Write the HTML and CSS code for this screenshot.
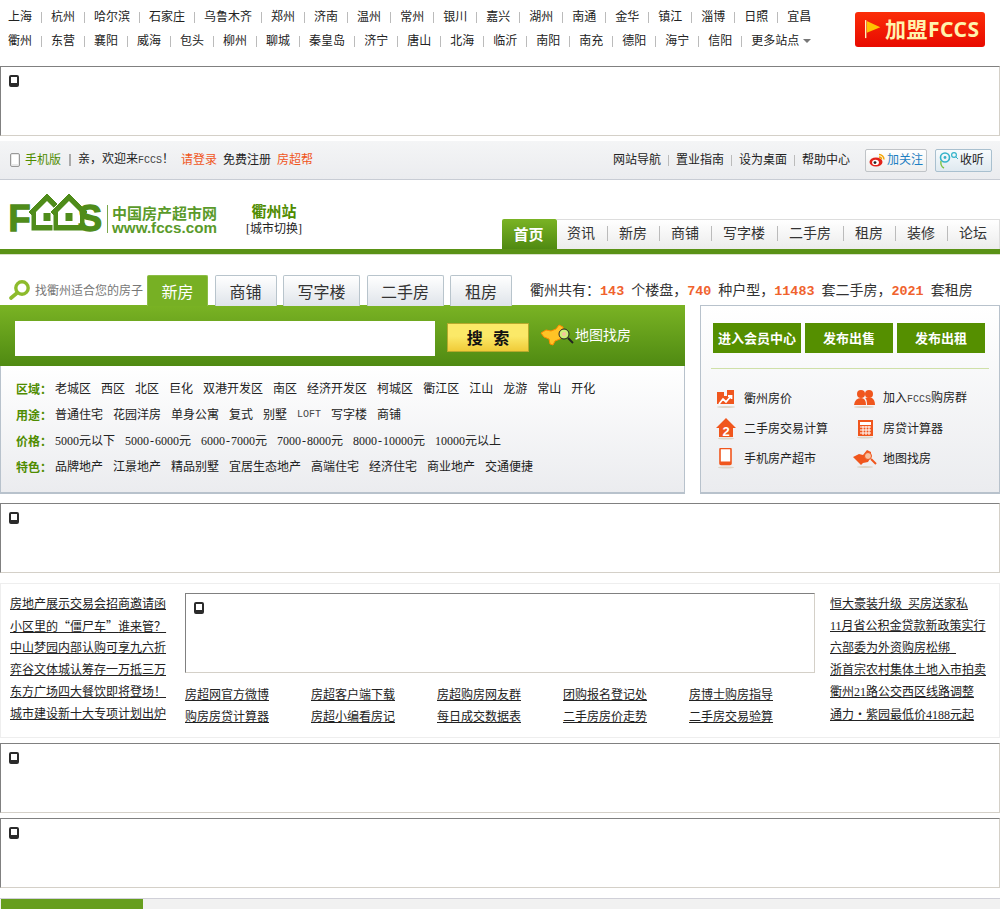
FILE: index.html
```html
<!DOCTYPE html>
<html lang="zh-CN">
<head>
<meta charset="utf-8">
<title>衢州房产超市网</title>
<link rel="stylesheet" href="styles.css">
</head>
<body>
<header class="top">
  <div class="cities">
    <ul class="city-row">
      <li>上海</li><li>杭州</li><li>哈尔滨</li><li>石家庄</li><li>乌鲁木齐</li><li>郑州</li><li>济南</li><li>温州</li><li>常州</li><li>银川</li><li>嘉兴</li><li>湖州</li><li>南通</li><li>金华</li><li>镇江</li><li>淄博</li><li>日照</li><li>宜昌</li>
    </ul>
    <ul class="city-row">
      <li>衢州</li><li>东营</li><li>襄阳</li><li>威海</li><li>包头</li><li>柳州</li><li>聊城</li><li>秦皇岛</li><li>济宁</li><li>唐山</li><li>北海</li><li>临沂</li><li>南阳</li><li>南充</li><li>德阳</li><li>海宁</li><li>信阳</li><li class="more">更多站点<i class="caret"></i></li>
    </ul>
  </div>
  <a class="join">
    <svg class="join-flag" viewBox="0 0 20 22" width="18" height="20"><rect x="0" y="0" width="1.5" height="20" fill="#fff3c0"/><path d="M2 1 L17 8 L2 14 Z" fill="#ffc400"/></svg>
    <span>加盟FCCS</span>
  </a>
</header>

<div class="ad"><i class="plug"></i></div>

<div class="toolbar">
  <div class="tool-left">
    <svg class="phone" viewBox="0 0 10 14" width="10" height="14"><rect x="0.5" y="0.5" width="9" height="13" rx="1.5" fill="#e8e8e8" stroke="#999"/><rect x="2" y="2" width="6" height="9" fill="#fff"/></svg>
    <a class="green mob">手机版</a>
    <i class="bar"></i>
    <span class="welcome">亲，欢迎来<span class="asc">FCCS</span>！</span>
    <a class="orange">请登录</a>
    <a>免费注册</a>
    <a class="orange">房超帮</a>
  </div>
  <div class="tool-right">
    <ul class="tool-links"><li>网站导航</li><li>置业指南</li><li>设为桌面</li><li>帮助中心</li></ul>
    <a class="follow">
      <svg viewBox="0 0 16 14" width="16" height="14"><ellipse cx="7" cy="9" rx="6.5" ry="4.6" fill="#e2231a"/><ellipse cx="6.5" cy="9.4" rx="3.4" ry="2.7" fill="#fff"/><circle cx="6" cy="9.6" r="1.4" fill="#222"/><path d="M10 1.5 A5 5 0 0 1 15 6.5 M10 4 A2.6 2.6 0 0 1 12.6 6.5" stroke="#f5a300" stroke-width="1.4" fill="none"/></svg>
      <span>加关注</span>
    </a>
    <a class="listen">
      <svg viewBox="0 0 20 18" width="20" height="18"><circle cx="6" cy="6.5" r="4.5" fill="none" stroke="#35b3c9" stroke-width="1.6"/><circle cx="6" cy="6.5" r="1.4" fill="#35b3c9"/><path d="M2 10 Q1 15 5 17" stroke="#7cc243" stroke-width="1.4" fill="none"/><circle cx="15" cy="4" r="2.4" fill="none" stroke="#35b3c9" stroke-width="1.2"/><path d="M17 6 L19 8" stroke="#35b3c9"/></svg>
      <span>收听</span>
    </a>
  </div>
</div>

<div class="masthead">
  <div class="logo">
    <svg class="logo-mark" viewBox="0 0 97 39" width="97" height="39">
      <text class="logo-letter" x="-1.5" y="37.5">F</text>
      <path d="M37 0 L56 19 L53 22 L53 38 L21 38 L21 22 L18 19 Z" fill="#4f8c1a" stroke="#fff" stroke-width="1"/>
      <path d="M37 8 L48 19 L48 32 L26 32 L26 19 Z" fill="#fff"/>
      <rect x="33.5" y="20" width="7" height="8" fill="#4f8c1a"/>
      <path d="M59 0 L78 19 L75 22 L75 38 L43 38 L43 22 L40 19 Z" fill="#4f8c1a" stroke="#fff" stroke-width="1"/>
      <path d="M59 8 L70 19 L70 32 L48 32 L48 19 Z" fill="#fff"/>
      <rect x="55.5" y="20" width="7" height="8" fill="#4f8c1a"/>
      <text class="logo-letter" x="68" y="37.5">S</text>
    </svg>
    <div class="logo-text">
      <strong>中国房产超市网</strong>
      <b>www.fccs.com</b>
    </div>
  </div>
  <div class="station">
    <strong>衢州站</strong>
    <span>[城市切换]</span>
  </div>
  <nav class="nav">
    <a class="nav-home">首页</a>
    <ul class="nav-list"><li>资讯</li><li>新房</li><li>商铺</li><li>写字楼</li><li>二手房</li><li>租房</li><li>装修</li><li>论坛</li></ul>
  </nav>
</div>
<div class="rule"></div>

<div class="search-head">
  <svg class="lens" viewBox="0 0 22 20" width="22" height="20"><circle cx="13" cy="8" r="6.2" fill="#fff" stroke="#8dbb2c" stroke-width="3.4"/><path d="M8 13 L2 18" stroke="#8dbb2c" stroke-width="3.6" stroke-linecap="round"/></svg>
  <span class="find">找衢州适合您的房子</span>
  <ul class="tabs">
    <li class="tab active">新房</li><li class="tab">商铺</li><li class="tab tab-wide">写字楼</li><li class="tab tab-wide">二手房</li><li class="tab">租房</li>
  </ul>
  <p class="stats">衢州共有：<b>143</b>个楼盘，<b>740</b>种户型，<b>11483</b>套二手房，<b>2021</b>套租房</p>
</div>

<div class="search-main">
  <section class="finder">
    <div class="search-bar">
      <div class="search-input"></div>
      <a class="search-btn">搜 索</a>
      <svg class="map" viewBox="0 0 34 22" width="34" height="22"><path d="M1 9 L6 6 L11 7 L16 5 L19 1 L23 3 L23 9 L20 15 L15 17 L13 21 L10 20 L9 15 L4 13 Z" fill="#ffc326" stroke="#ff8a00"/><circle cx="24" cy="10" r="5" fill="#cdf07a" stroke="#222"/><circle cx="24" cy="10" r="2" fill="#f7c1a0"/><path d="M28 14 L33 19" stroke="#222" stroke-width="2"/></svg>
      <a class="map-link">地图找房</a>
    </div>
    <div class="filters">
      <div class="filter"><b>区域：</b><a>老城区</a><a>西区</a><a>北区</a><a>巨化</a><a>双港开发区</a><a>南区</a><a>经济开发区</a><a>柯城区</a><a>衢江区</a><a>江山</a><a>龙游</a><a>常山</a><a>开化</a></div>
      <div class="filter"><b>用途：</b><a>普通住宅</a><a>花园洋房</a><a>单身公寓</a><a>复式</a><a>别墅</a><a class="asc">LOFT</a><a>写字楼</a><a>商铺</a></div>
      <div class="filter"><b>价格：</b><a>5000元以下</a><a>5000<span class="dash">-</span>6000元</a><a>6000<span class="dash">-</span>7000元</a><a>7000<span class="dash">-</span>8000元</a><a>8000<span class="dash">-</span>10000元</a><a>10000元以上</a></div>
      <div class="filter"><b>特色：</b><a>品牌地产</a><a>江景地产</a><a>精品别墅</a><a>宜居生态地产</a><a>高端住宅</a><a>经济住宅</a><a>商业地产</a><a>交通便捷</a></div>
    </div>
  </section>
  <aside class="member">
    <div class="member-btns"><a>进入会员中心</a><a>发布出售</a><a>发布出租</a></div>
    <ul class="member-links">
      <li><svg viewBox="0 0 20 20" width="20" height="20"><path d="M1 3 H8 V7 H11 V1 H18 V15 H1 Z" fill="#f0561d"/><path d="M3 15 L7 10 L10 13 L15 7 M12 7 H15.5 V10" stroke="#fff" stroke-width="1.8" fill="none"/><ellipse cx="10" cy="18" rx="9" ry="1" fill="#ddd5c8"/></svg><span>衢州房价</span></li>
      <li><svg viewBox="0 0 22 20" width="22" height="20"><circle cx="7" cy="5" r="4" fill="#f0561d"/><circle cx="15" cy="5" r="4" fill="#f0561d"/><path d="M0 16 Q1 9 7 9 Q12 9 12 16 Z M13 16 Q13 10 11 9 Q15 8 18 9 Q21 11 21 16 Z" fill="#f0561d"/><ellipse cx="10" cy="18" rx="10" ry="1" fill="#ddd5c8"/></svg><span>加入<span class="asc">FCCS</span>购房群</span></li>
      <li><svg viewBox="0 0 20 22" width="20" height="22"><path d="M10 0 L20 10 L17 10 L17 19 L3 19 L3 10 L0 10 Z" fill="#f0561d"/><text x="10" y="18" font-size="13" font-weight="700" font-family="Liberation Sans, sans-serif" text-anchor="middle" fill="#fff">2</text><ellipse cx="10" cy="20.5" rx="8" ry="1" fill="#ddd5c8"/></svg><span>二手房交易计算</span></li>
      <li><svg viewBox="0 0 20 20" width="20" height="20"><rect x="3" y="1" width="15" height="16" fill="#f0561d"/><rect x="5" y="3" width="11" height="3" fill="#fff"/><path d="M5 8 H16 M5 11 H16 M5 14 H16 M8 7 V16 M11 7 V16 M14 7 V16" stroke="#fff"/><ellipse cx="10" cy="18.5" rx="8" ry="1" fill="#ddd5c8"/></svg><span>房贷计算器</span></li>
      <li><svg viewBox="0 0 20 22" width="20" height="22"><rect x="4" y="0.5" width="11" height="16" rx="1" fill="#fff" stroke="#f0561d" stroke-width="1.6"/><rect x="4" y="13.5" width="11" height="3" fill="#f0561d"/><ellipse cx="10" cy="19.5" rx="8" ry="1" fill="#ddd5c8"/></svg><span>手机房产超市</span></li>
      <li><svg viewBox="0 0 24 20" width="24" height="20"><path d="M0 8 L6 5 L10 6 L14 1 L18 3 L18 8 L15 13 L10 14 L8 16 L4 12 Z" fill="#f0561d"/><circle cx="15" cy="7" r="3.5" fill="#f7c1a0" stroke="#f0561d"/><path d="M18 10 L23 15" stroke="#f0561d" stroke-width="2"/><ellipse cx="12" cy="18" rx="8" ry="1" fill="#ddd5c8"/></svg><span>地图找房</span></li>
    </ul>
  </aside>
</div>

<div class="ad ad-a"><i class="plug"></i></div>

<section class="news">
  <ul class="news-list">
    <li>房地产展示交易会招商邀请函</li>
    <li>小区里的<span class="wq">“</span>僵尸车<span class="wq">”</span>谁来管？</li>
    <li>中山梦园内部认购可享九六折</li>
    <li>弈谷文体城认筹存一万抵三万</li>
    <li>东方广场四大餐饮即将登场！</li>
    <li>城市建设新十大专项计划出炉</li>
  </ul>
  <div class="news-mid">
    <div class="ad ad-inner"><i class="plug"></i></div>
    <div class="quick">
      <a>房超网官方微博</a><a>房超客户端下载</a><a>房超购房网友群</a><a>团购报名登记处</a><a>房博士购房指导</a>
      <a>购房房贷计算器</a><a>房超小编看房记</a><a>每日成交数据表</a><a>二手房房价走势</a><a>二手房交易验算</a>
    </div>
  </div>
  <ul class="news-list news-right">
    <li>恒大豪装升级 买房送家私</li>
    <li>11月省公积金贷款新政策实行</li>
    <li>六部委为外资购房松绑&nbsp;</li>
    <li>浙首宗农村集体土地入市拍卖</li>
    <li>衢州21路公交西区线路调整</li>
    <li>通力<span class="wq">·</span>紫园最低价4188元起</li>
  </ul>
</section>

<div class="ad ad-b"><i class="plug"></i></div>
<div class="ad ad-c"><i class="plug"></i></div>

<div class="foot-tab"><div class="foot-active"></div></div>
</body>
</html>
```

FILE: styles.css
```css
* { box-sizing: border-box; }
html, body { margin: 0; padding: 0; }
body {
  width: 1000px;
  background: #fff;
  color: #222;
  font: 12px/16px "Liberation Serif", "Noto Sans CJK SC", sans-serif;
}
ul { list-style: none; margin: 0; padding: 0; }
p { margin: 0; }
a { color: inherit; }
.asc { font-family: "Liberation Mono", "Noto Sans CJK SC", monospace; font-size: 10px; color: #444; }

/* top */
.top { height: 66px; display: flex; justify-content: space-between; padding: 5px 15px 0 8px; }
.city-row { display: flex; height: 24px; align-items: center; }
.city-row li { display: flex; align-items: center; white-space: nowrap; }
.city-row li + li::before { content: ""; width: 1px; height: 11px; background: #bbb; margin: 0 9px; }
.caret { width: 0; height: 0; margin-left: 4px; border: 4px solid transparent; border-top: 4px solid #777; border-bottom: 0; }
.join {
  width: 130px; height: 35px; margin-top: 7px; border-radius: 3px;
  background: linear-gradient(#fb2d08, #e80a00);
  display: flex; align-items: center; padding-left: 10px;
  color: #fff2ad; font: 700 21px/35px "Noto Sans", "Noto Sans CJK SC", sans-serif;
  letter-spacing: 0.5px; white-space: nowrap;
}
.join-flag { margin-right: 2px; flex: none; }

/* placeholder */
.ad {
  height: 70px; padding: 8px 0 0 8px;
  border: 1px solid; border-color: #808080 #d4d0c8 #d4d0c8 #808080;
  background: #fff;
}
.plug { display: block; width: 10px; height: 12px; border: 2px solid #2b2b2b; border-bottom-width: 4px; border-radius: 2px; background: #fff; }
.ad-a { margin-top: 9px; }
.ad-b { margin-top: 5px; }
.ad-c { margin-top: 5px; }

/* toolbar */
.toolbar {
  height: 39px; margin-top: 5px; padding: 0 8px 0 10px;
  border-bottom: 1px solid #c8ccd4;
  background: linear-gradient(#f4f5f6, #ebecef);
  display: flex; justify-content: space-between; align-items: center;
}
.tool-left { display: flex; align-items: center; gap: 6px; }
.phone { margin-right: -1px; }
.green { color: #4f8c00; }
.orange { color: #f0561d; }
.bar { width: 2px; height: 12px; background: #aaa; margin: 0 1px 0 2px; }
.welcome { margin-right: 6px; width: 91px; white-space: nowrap; }
.tool-right { display: flex; align-items: center; }
.tool-links { display: flex; margin-right: 15px; }
.tool-links li { display: flex; align-items: center; }
.tool-links li + li::before { content: ""; width: 1px; height: 11px; background: #bbb; margin: 0 7px; }
.follow, .listen { display: flex; align-items: center; height: 23px; border: 1px solid #c0c4c8; border-radius: 2px; }
.follow { width: 62px; padding-left: 3px; gap: 2px; color: #1f7fc2; background: linear-gradient(#fff, #eee); }
.listen { width: 57px; margin-left: 8px; padding-left: 3px; gap: 1px; border-color: #a9c0cf; background: linear-gradient(#f7fbfd, #dfe9f0); }

/* masthead */
.masthead { height: 69px; position: relative; display: flex; align-items: flex-end; padding: 0 0 0 10px; }
.logo { display: flex; align-items: flex-start; height: 56px; width: 235px; }
.logo-mark { display: block; flex: none; overflow: visible; }
.logo-letter { font: 700 36px "Liberation Sans", sans-serif; fill: #4f8c1a; stroke: #4f8c1a; stroke-width: 1.4; }
.logo-text { display: flex; flex-direction: column; margin: 12px 0 0 0; padding-left: 4px; border-left: 1px solid #7ba84a; height: 28px; justify-content: flex-start; color: #5a9a2a; }
.logo-text strong { font: 700 15px/15px "Noto Sans CJK SC", sans-serif; white-space: nowrap; }
.logo-text b { font: 700 15.2px/15px "Liberation Sans", sans-serif; white-space: nowrap; }
.station { width: 58px; height: 36px; display: flex; flex-direction: column; align-items: center; margin: 0 0 12px 0; }
.station strong { color: #4f8c00; font: 700 15px/20px "Noto Sans CJK SC", serif; }
.station span { white-space: nowrap; }
.nav { position: absolute; right: 0; bottom: 0; display: flex; width: 498px; height: 30px; }
.nav-home {
  width: 55px; height: 30px; padding-right: 2px; text-align: center; color: #fff;
  font: 700 15px/29px "Noto Sans CJK SC", sans-serif;
  background: linear-gradient(#7ab324, #508a12);
  border-radius: 2px 2px 0 0;
}
.nav-list {
  flex: 1; display: flex; align-items: center; padding: 0 0 2px 10px;
  border-top: 1px solid #ddd; border-right: 1px solid #ddd;
  background: linear-gradient(#fff, #ececec);
  font-size: 14px; color: #333;
}
.nav-list li { display: flex; align-items: center; }
.nav-list li + li::before { content: ""; width: 1px; height: 15px; background: #bbb; margin: 0 11px 0 12px; }
.rule { height: 6px; background: #5a9216; border-bottom: 1px solid #d8e0c8; }

/* search head */
.search-head { height: 50px; display: flex; align-items: flex-end; padding-left: 9px; position: relative; z-index: 1; }
.lens { margin-bottom: 5px; }
.find { color: #777; width: 112px; margin: 0 0 6px 4px; white-space: nowrap; }
.tabs { display: flex; gap: 6.5px; margin-bottom: -1px; }
.tab {
  height: 31px; padding: 0 14px; border: 1px solid #b8c4cc; border-bottom: 0;
  background: linear-gradient(#fff, #dfe4ea);
  font: 16px/31px "Noto Sans CJK SC", sans-serif; color: #333; border-radius: 2px 2px 0 0;
}
.tab-wide { padding: 0 13.5px; }
.tab.active { padding: 0 13.5px; color: #fff; background: #77b024; border-color: #8cbd46; }
.stats { font: 14px/20px "Noto Sans CJK SC", sans-serif; margin: 0 0 3px 18px; white-space: nowrap; color: #333; }
.stats b { font: 700 13.4px/20px "Liberation Mono", monospace; color: #f0622d; margin-right: 7px; }

/* finder */
.search-main { display: flex; justify-content: space-between; height: 189px; }
.finder { width: 685px; display: flex; flex-direction: column; }
.search-bar {
  height: 61px; display: flex; align-items: center; padding: 6px 0 0 15px;
  background: linear-gradient(#7ab324, #4f8a12);
}
.search-input { width: 420px; height: 35px; background: #fff; }
.search-btn {
  width: 82px; height: 29px; margin: -3px 11px 0 12px; text-align: center; color: #111;
  background: linear-gradient(#fbe968 45%, #f0cb38); border: 1px solid #b6a92c;
  font: 700 16px/27px "Noto Sans CJK SC", sans-serif; white-space: pre; word-spacing: 7px;
}
.map { margin: -7px 1px 0 0; }
.map-link { color: #fff; font: 14px/20px "Noto Sans CJK SC", sans-serif; margin-top: -10px; }
.filters {
  height: 128px; padding: 10px 0 0 15px;
  border: 1px solid #b8c2cc; border-top: 0; border-bottom-width: 2px;
  background: linear-gradient(#fff, #ebecef);
}
.filter { display: flex; height: 26px; align-items: center; gap: 10px; white-space: nowrap; }
.filter b { color: #4f8c00; font-family: "Noto Sans CJK SC", sans-serif; width: 29px; margin-right: 0; }
.filter .asc { font-size: 10px; }
.dash { padding: 0 1px; }

/* member */
.member {
  width: 300px; padding: 17px 12px 0 12px;
  border: 1px solid #b8c2cc; border-bottom-width: 2px;
  background: linear-gradient(#fff, #ebecef);
}
.member-btns { display: flex; gap: 4px; height: 45px; }
.member-btns a { width: 88px; height: 30px; background: #558f00; color: #fff; text-align: center; font: 700 13px/30px "Noto Sans CJK SC", sans-serif; white-space: nowrap; }
.member-links { border-top: 1px solid #cfe0a8; margin-left: -2px; width: 278px; display: grid; grid-template-columns: 139px 139px; grid-auto-rows: 30px; padding: 15px 0 0 3px; }
.member-links li { display: flex; align-items: center; }
.member-links svg { width: 24px; flex: none; margin-right: 6px; }

/* news */
.news {
  height: 155px; margin-top: 10px; padding: 9px 0 0 9px;
  border: 1px solid #eee; display: flex;
}
.news-list { width: 176px; }
.news-list li { height: 22px; line-height: 22px; text-decoration: underline; white-space: nowrap; width: 156px; word-spacing: 3px; }
.wq { font-family: "Noto Sans CJK SC", sans-serif; }
.news-mid { width: 645px; margin-left: -1px; }
.ad-inner { width: 630px; height: 80px; }
.quick { display: grid; grid-template-columns: repeat(5, 126px); grid-auto-rows: 22px; margin-top: 11px; }
.quick a { line-height: 22px; text-decoration: underline; white-space: nowrap; }
.news-right { width: 160px; }

/* footer */
.foot-tab { height: 11px; margin-top: 10px; padding-left: 1px; background: #f1f1f1; border-top: 1px solid #d0d0d8; }
.foot-active { width: 142px; height: 10px; background: #669e1e; }
```
